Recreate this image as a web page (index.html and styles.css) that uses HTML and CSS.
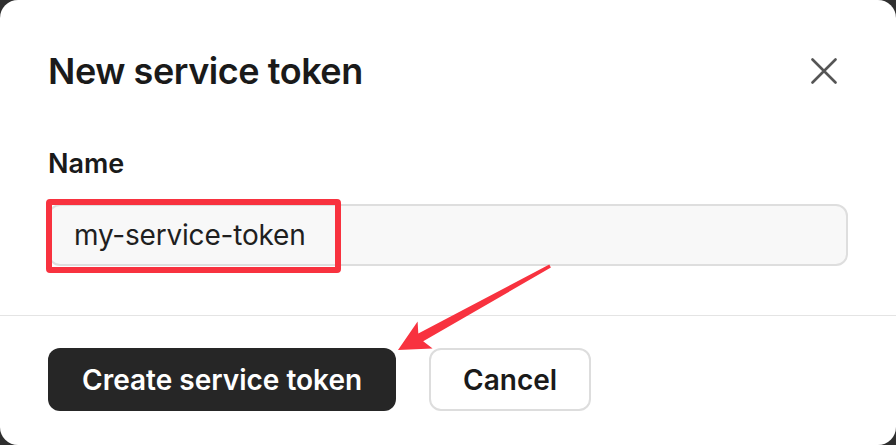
FILE: index.html
```html
<!DOCTYPE html>
<html lang="en">
<head>
<meta charset="utf-8">
<title>New service token</title>
<link rel="stylesheet" href="styles.css">
</head>
<body>
<div class="dialog">
  <div class="dialog-header">
    <h2 class="dialog-title">New service token</h2>
    <button class="close-btn" aria-label="Close">
      <svg width="26" height="26" viewBox="0 0 26 26"><path d="M1.5 1.5 L24.5 24.5 M24.5 1.5 L1.5 24.5" stroke="#555" stroke-width="2.6" stroke-linecap="round" fill="none"/></svg>
    </button>
  </div>
  <div class="dialog-body">
    <label class="field-label">Name</label>
    <div class="text-input">my-service-token</div>
  </div>
  <div class="dialog-footer">
    <button class="btn btn-primary">Create service token</button>
    <button class="btn btn-secondary">Cancel</button>
  </div>
  <div class="annotation-box"></div>
  <svg class="annotation-arrow" width="896" height="445" viewBox="0 0 896 445">
    <polygon fill="#f8323f" points="398,350 417.6,321.4 418.3,333.5 549.3,264.5 550.9,267.5 423.2,341.3 432.6,348.6"/>
  </svg>
</div>
</body>
</html>
```
FILE: styles.css
```css
* { box-sizing: border-box; }
html, body { margin: 0; padding: 0; }
body {
  background: #2f2f2f;
  width: 896px;
  height: 445px;
  overflow: hidden;
  font-family: Inter, "Noto Sans", sans-serif;
  color: #1c1c1c;
}
.dialog {
  position: relative;
  width: 896px;
  height: 445px;
  background: #fff;
  border-radius: 18px;
  overflow: hidden;
}
.dialog-header {
  display: flex;
  align-items: center;
  justify-content: space-between;
  padding: 49px 59px 0 48px;
}
.dialog-title {
  margin: 0;
  font-size: 36px;
  line-height: 44px;
  font-weight: 600;
  letter-spacing: -0.45px;
  color: #1a1a1a;
}
.close-btn {
  border: 0;
  background: none;
  padding: 0;
  width: 26px;
  height: 26px;
  display: flex;
}
.dialog-body {
  padding: 55px 48px 49px 48px;
  display: flex;
  flex-direction: column;
  border-bottom: 1px solid #e4e4e4;
}
.field-label {
  font-size: 27px;
  line-height: 32px;
  font-weight: 600;
  color: #1a1a1a;
  margin-bottom: 24px;
}
.text-input {
  height: 62px;
  border: 2px solid #dedede;
  background: #f8f8f8;
  border-radius: 12px;
  padding: 0 24px;
  display: flex;
  align-items: center;
  font-size: 28px;
  letter-spacing: -0.2px;
  color: #1f1f1f;
}
.dialog-footer {
  display: flex;
  gap: 33px;
  padding: 32px 48px;
}
.btn {
  height: 63px;
  border-radius: 12px;
  font-family: Inter, "Noto Sans", sans-serif;
  font-size: 28px;
  font-weight: 600;
  padding: 0 34px;
}
.btn-primary {
  background: #262626;
  color: #fff;
  border: 0;
}
.btn-secondary {
  background: #fff;
  color: #1a1a1a;
  border: 2px solid #dddddd;
  padding: 0 32px;
}
.annotation-box {
  position: absolute;
  left: 46px;
  top: 199px;
  width: 295px;
  height: 74px;
  border: 6px solid #f8323f;
  border-radius: 4px;
}
.annotation-arrow {
  position: absolute;
  left: 0;
  top: 0;
}
```
